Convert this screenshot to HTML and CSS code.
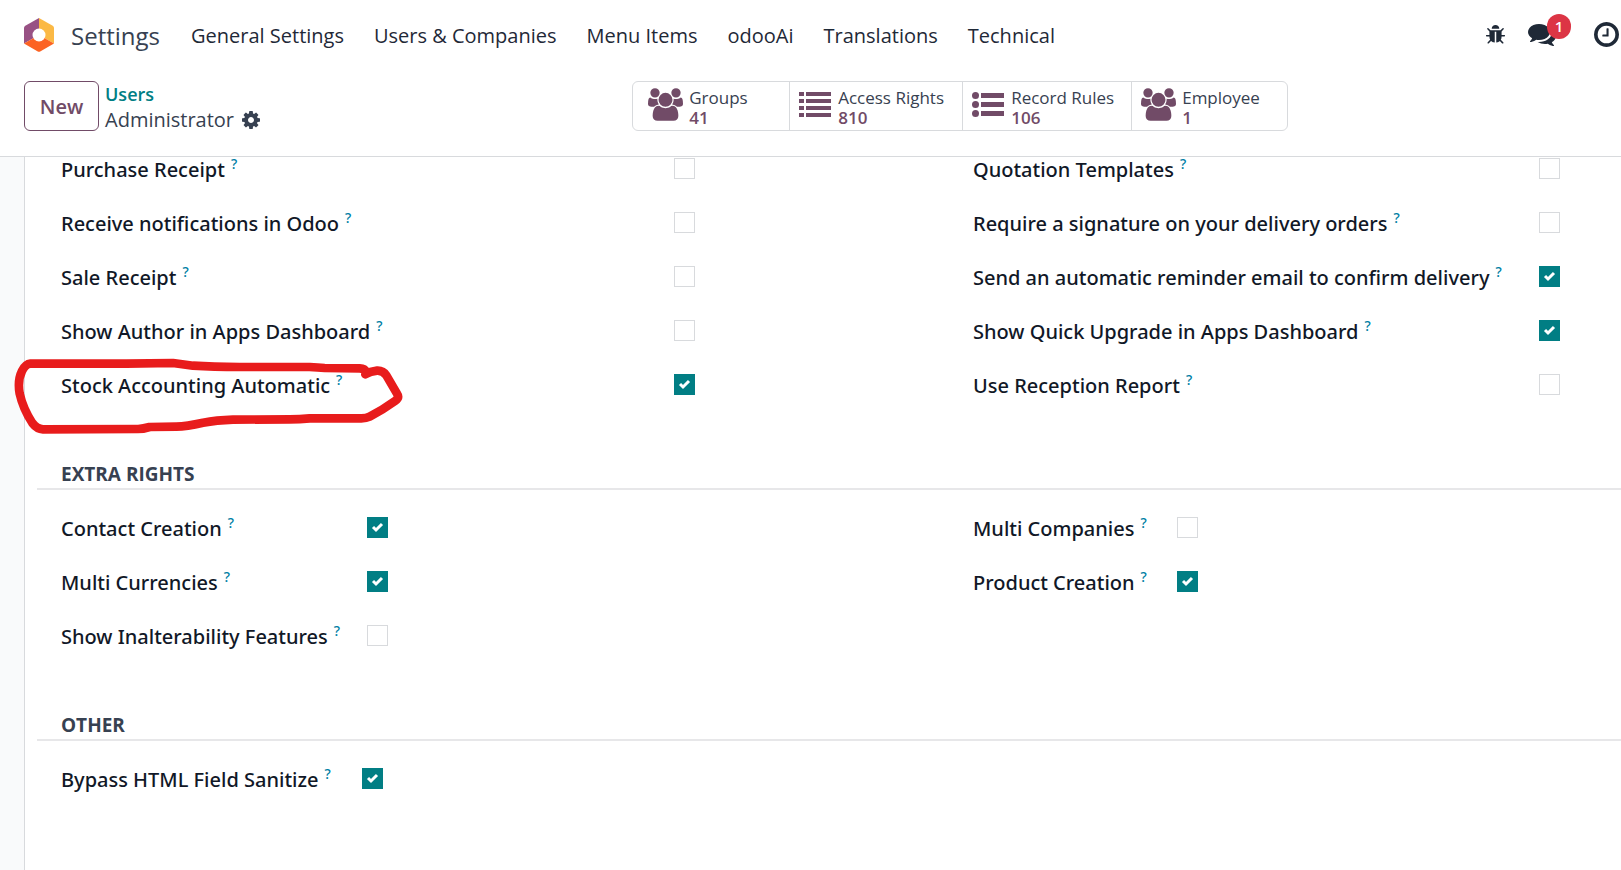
FILE: index.html
```
<!DOCTYPE html>
<html lang="en">
<head>
<meta charset="utf-8">
<title>Administrator - Settings</title>
<link rel="stylesheet" href="styles.css">
</head>
<body>
<svg class="defs" aria-hidden="true">
  <symbol id="i-users" viewBox="0 0 1920 1792"><path d="M593 896q-162 5-265 128h-134q-82 0-138-40.5t-56-118.5q0-353 124-353 6 0 43.5 21t97.5 42.5 119 21.5q67 0 133-23-5 37-5 66 0 139 81 256zm1071 637q0 120-73 189.5t-194 69.5h-874q-121 0-194-69.5t-73-189.5q0-53 3.5-103.5t14-109 26.5-108.5 43-97.5 62-81 85.5-53.5 111.5-20q10 0 43 21.5t73 48 107 48 135 21.5 135-21.5 107-48 73-48 43-21.5q61 0 111.5 20t85.5 53.5 62 81 43 97.5 26.5 108.5 14 109 3.5 103.5zm-1024-1277q0 106-75 181t-181 75-181-75-75-181 75-181 181-75 181 75 75 181zm704 384q0 159-112.5 271.5t-271.5 112.5-271.5-112.5-112.5-271.5 112.5-271.5 271.5-112.5 271.5 112.5 112.5 271.5zm576 225q0 78-56 118.5t-138 40.5h-134q-103-123-265-128 81-117 81-256 0-29-5-66 66 23 133 23 59 0 119-21.5t97.5-42.5 43.5-21q124 0 124 353zm-128-609q0 106-75 181t-181 75-181-75-75-181 75-181 181-75 181 75 75 181z"/></symbol>
</svg>

<header class="navbar">
  <a class="brand" href="#">
    <svg class="brand-logo" viewBox="0 0 30 34" aria-hidden="true">
      <path fill="#985184" d="M15 0v17L0 25.500V10Q0 8.500 1.300 7.700z"/>
      <path fill="#fbb945" d="M15 0l13.700 7.700Q30 8.500 30 10v15.500L15 17z"/>
      <path fill="#fc6323" d="M0 25.500L15 17l15 8.500L16.200 33.500Q15 34.200 13.800 33.500z"/>
      <circle cx="15" cy="17" r="6.500" fill="#fff"/>
    </svg>
    <span class="brand-name">Settings</span>
  </a>
  <nav class="menu">
    <a href="#">General Settings</a>
    <a href="#">Users &amp; Companies</a>
    <a href="#">Menu Items</a>
    <a href="#">odooAi</a>
    <a href="#">Translations</a>
    <a href="#">Technical</a>
  </nav>
  <div class="systray">
    <button type="button" class="tray-btn" aria-label="Debug"><svg class="i-bug" viewBox="96 64 1600 1600"><path d="M1696 960q0 26-19 45t-45 19h-224q0 171-67 290l208 209q19 19 19 45t-19 45q-18 19-45 19t-45-19l-198-197q-5 5-15 13t-42 28.500-65 36.500-82 29-97 13v-896h-128v896q-51 0-101.500-13.500t-87-33-66-39-43.500-32.500l-15-14-183 207q-20 21-48 21-24 0-43-16-19-18-20.500-44.500t15.500-46.500l202-227q-58-114-58-274h-224q-26 0-45-19t-19-45 19-45 45-19h224v-294l-173-173q-19-19-19-45t19-45 45-19 45 19l173 173h844l173-173q19-19 45-19t45 19 19 45-19 45l-173 173v294h224q26 0 45 19t19 45zm-480-576h-640q0-133 93.500-226.500t226.500-93.500 226.500 93.500 93.500 226.500z"/></svg></button>
    <button type="button" class="tray-btn" aria-label="Messages"><svg class="i-comments" viewBox="0 256 1792 1408"><path d="M1408 768q0 139-94 257t-256.500 186.500-353.500 68.500q-86 0-176-16-124 88-278 128-36 9-86 16h-3q-11 0-20.500-8t-11.500-21q-1-3-1-6.500t.5-6.500 2-6l2.500-5 3.500-5.500 4-5 4.500-5 4-4.500q5-6 23-25t26-29.500 22.500-29 25-38.500 20.500-44q-124-72-195-177t-71-224q0-139 94-257t256.500-186.500 353.500-68.500 353.500 68.500 256.500 186.500 94 257zm384 256q0 120-71 224.500t-195 176.500q10 24 20.500 44t25 38.500 22.500 29 26 29.500 23 25q1 1 4 4.500t4.500 5 4 5 3.500 5.500l2.500 5 2 6 .5 6.500-1 6.500q-3 14-13 22t-22 7q-50-7-86-16-154-40-278-128-90 16-176 16-271 0-472-132 58 4 88 4 161 0 309-45t264-129q125-92 192-212t67-254q0-77-23-152 129 71 204 178t75 230z"/></svg><span class="badge">1</span></button>
    <button type="button" class="tray-btn" aria-label="Activities"><svg class="i-clock" viewBox="128 128 1536 1536"><path d="M1024 544v448q0 14-9 23t-23 9h-320q-14 0-23-9t-9-23v-64q0-14 9-23t23-9h224v-352q0-14 9-23t23-9h64q14 0 23 9t9 23zm416 352q0-148-73-273t-198-198-273-73-273 73-198 198-73 273 73 273 198 198 273 73 273-73 198-198 73-273zm224 0q0 209-103 385.500t-279.500 279.500-385.500 103-385.500-103-279.500-279.500-103-385.500 103-385.500 279.500-279.500 385.500-103 385.500 103 279.500 279.500 103 385.500z"/></svg></button>
  </div>
</header>

<section class="control-panel">
  <div class="cp-left">
    <button type="button" class="btn-new">New</button>
    <div class="breadcrumb">
      <a href="#">Users</a>
      <div class="current"><span>Administrator</span>
        <button type="button" class="gear" aria-label="Actions"><svg viewBox="128 128 1536 1536"><path d="M1152 896q0-106-75-181t-181-75-181 75-75 181 75 181 181 75 181-75 75-181zm512-109v222q0 12-8 23t-20 13l-185 28q-19 54-39 91 35 50 107 138 10 12 10 25t-9 23q-27 37-99 108t-94 71q-12 0-26-9l-138-108q-44 23-91 38-16 136-29 186-7 28-36 28h-222q-14 0-24.500-8.500t-11.500-21.500l-28-184q-49-16-90-37l-141 107q-10 9-25 9-14 0-25-11-126-114-165-168-7-10-7-23 0-12 8-23 15-21 51-66.500t54-70.500q-27-50-41-99l-183-27q-13-2-21-12.500t-8-23.500v-222q0-12 8-23t19-13l186-28q14-46 39-92-40-57-107-138-10-12-10-24 0-10 9-23 26-36 98.500-107.500t94.500-71.500q13 0 26 10l138 107q44-23 91-38 16-136 29-186 7-28 36-28h222q14 0 24.500 8.500t11.500 21.500l28 184q49 16 90 37l142-107q9-9 24-9 13 0 25 10 129 119 165 170 7 8 7 22 0 12-8 23-15 21-51 66.500t-54 70.500q26 50 41 98l183 28q13 2 21 12.500t8 23.500z"/></svg></button>
      </div>
    </div>
  </div>
  <div class="stats">
    <button type="button" class="stat stat-first"><svg class="i-users"><use href="#i-users"/></svg><span class="stat-text"><span>Groups</span><b>41</b></span></button>
    <button type="button" class="stat stat-wide"><svg class="i-list" viewBox="0 0 32 26"><path d="M0 0h5v4H0zM7 0h25v4H7zM0 7h5v4H0zM7 7h25v4H7zM0 14h5v4H0zM7 14h25v4H7zM0 21h5v4H0zM7 21h25v4H7z"/></svg><span class="stat-text"><span>Access Rights</span><b>810</b></span></button>
    <button type="button" class="stat stat-medium"><svg class="i-list" viewBox="0 0 32 26"><circle cx="3.500" cy="3.500" r="3.500"/><circle cx="3.500" cy="12.500" r="3.500"/><circle cx="3.500" cy="21.500" r="3.500"/><path d="M9 1h23v5H9zM9 10h23v5H9zM9 19h23v5H9z"/></svg><span class="stat-text"><span>Record Rules</span><b>106</b></span></button>
    <button type="button" class="stat"><svg class="i-users"><use href="#i-users"/></svg><span class="stat-text"><span>Employee</span><b>1</b></span></button>
  </div>
</section>

<main class="content">
  <div class="sheet">
    <section class="group technical">
      <div class="col">
        <div class="field"><label for="f1">Purchase Receipt<sup>?</sup></label><input type="checkbox" id="f1"></div>
        <div class="field"><label for="f2">Receive notifications in Odoo<sup>?</sup></label><input type="checkbox" id="f2"></div>
        <div class="field"><label for="f3">Sale Receipt<sup>?</sup></label><input type="checkbox" id="f3"></div>
        <div class="field"><label for="f4">Show Author in Apps Dashboard<sup>?</sup></label><input type="checkbox" id="f4"></div>
        <div class="field"><label for="f5">Stock Accounting Automatic<sup>?</sup></label><input type="checkbox" id="f5" checked></div>
      </div>
      <div class="col">
        <div class="field"><label for="f6">Quotation Templates<sup>?</sup></label><input type="checkbox" id="f6"></div>
        <div class="field"><label for="f7">Require a signature on your delivery orders<sup>?</sup></label><input type="checkbox" id="f7"></div>
        <div class="field"><label for="f8">Send an automatic reminder email to confirm delivery<sup>?</sup></label><input type="checkbox" id="f8" checked></div>
        <div class="field"><label for="f9">Show Quick Upgrade in Apps Dashboard<sup>?</sup></label><input type="checkbox" id="f9" checked></div>
        <div class="field"><label for="f10">Use Reception Report<sup>?</sup></label><input type="checkbox" id="f10"></div>
      </div>
    </section>

    <h2>Extra Rights</h2>
    <section class="group extra">
      <div class="col">
        <div class="field"><label for="f11">Contact Creation<sup>?</sup></label><input type="checkbox" id="f11" checked></div>
        <div class="field"><label for="f12">Multi Currencies<sup>?</sup></label><input type="checkbox" id="f12" checked></div>
        <div class="field"><label for="f13">Show Inalterability Features<sup>?</sup></label><input type="checkbox" id="f13"></div>
      </div>
      <div class="col">
        <div class="field"><label for="f14">Multi Companies<sup>?</sup></label><input type="checkbox" id="f14"></div>
        <div class="field"><label for="f15">Product Creation<sup>?</sup></label><input type="checkbox" id="f15" checked></div>
      </div>
    </section>

    <h2>Other</h2>
    <section class="group other">
      <div class="col">
        <div class="field"><label for="f16">Bypass HTML Field Sanitize<sup>?</sup></label><input type="checkbox" id="f16" checked></div>
      </div>
    </section>
  </div>
  <svg class="marker" viewBox="40 620 1176 234" aria-hidden="true"><path d="M1097 672Q1112 663 1132 661Q1150 660 1160 675L1192 730Q1200 742 1186 752Q1150 778 1110 799Q1100 804 1085 804L930 804Q900 807 870 807L700 808Q650 810 610 817Q560 828 530 829L450 830Q430 836 415 836L130 837Q112 836 98 818Q70 775 60 730Q53 690 67 662Q78 641 92 640L380 640L520 638Q545 641 580 646Q640 650 720 650L930 650Q955 652 975 653L1080 654Q1095 655 1098 662"/></svg>
</main>
</body>
</html>
```

FILE: styles.css
```
* { box-sizing: border-box; }

body {
  margin: 0;
  min-height: 100vh;
  display: flex;
  flex-direction: column;
  overflow: hidden;
  background: #fff;
  color: #111827;
  font-family: "Open Sans", "Noto Sans", sans-serif;
  font-size: 20px;
  line-height: 26px;
}

a { color: inherit; text-decoration: none; }

button {
  font: inherit;
  color: inherit;
  background: none;
  border: 0;
  padding: 0;
  cursor: pointer;
}

svg { display: block; fill: currentColor; }

.defs { position: absolute; width: 0; height: 0; }

/* Top bar */
.navbar {
  display: flex;
  align-items: center;
  height: 70px;
  padding: 0 2px 0 24px;
  color: #1f2937;
}

.brand {
  display: flex;
  align-items: center;
  gap: 17px;
  margin-right: 31px;
  color: #374151;
  font-size: 24px;
}

.brand-logo { width: 30px; height: 34px; }
.brand-name, .menu { padding-top: 2px; }

.menu {
  display: flex;
  gap: 30px;
  white-space: nowrap;
}

.systray {
  display: flex;
  align-items: center;
  margin-left: auto;
  padding-bottom: 1px;
}

.tray-btn { position: relative; }

.i-bug { width: 19px; height: 19px; margin-right: 23px; }
.i-comments { width: 28px; height: 22px; margin-right: 38px; }
.i-clock { width: 25px; height: 25px; }

.badge {
  position: absolute;
  left: 19px;
  top: -10px;
  width: 24px;
  height: 25px;
  border-radius: 13px;
  background: #dc3545;
  color: #fff;
  font-size: 15px;
  font-weight: 600;
  line-height: 24px;
}

/* Control panel */
.control-panel {
  display: grid;
  grid-template-columns: 39% auto;
  align-items: start;
  height: 87px;
  padding-top: 11px;
  border-bottom: 1px solid #d8dadd;
}

.cp-left {
  display: flex;
  gap: 6px;
  padding-left: 24px;
}

.btn-new {
  width: 75px;
  height: 50px;
  padding-top: 2px;
  border: 1px solid #714b67;
  border-radius: 6px;
  color: #714b67;
  font-weight: 600;
}

.breadcrumb a { display: block; color: #017e84; font-weight: 600; font-size: 18px; }

.current { display: flex; align-items: center; gap: 8px; color: #374151; }

.gear svg { width: 18px; height: 18px; }

.stats {
  display: flex;
  width: 656px;
  height: 50px;
  border: 1px solid #d8dadd;
  border-radius: 6px;
}

.stat {
  display: flex;
  align-items: center;
  gap: 6px;
  flex: 146 0 0;
  padding-left: 9px;
  color: #714b67;
  border-left: 1px solid #d8dadd;
  text-align: left;
  white-space: nowrap;
}

.stat-first { flex-grow: 141; padding-left: 15px; border-left: 0; }
.stat-wide { flex-grow: 163; gap: 7px; }
.stat-medium { flex-grow: 159; gap: 7px; }

.i-users { width: 35px; height: 33px; margin-bottom: 3px; }
.i-list { width: 32px; height: 26px; margin-bottom: 3px; }

.stat-text {
  display: flex;
  flex-direction: column;
  padding-top: 3px;
  font-size: 17px;
  line-height: 20px;
}

.stat-text span { color: #374151; }
.stat-text b { font-weight: 600; }

/* Form */
.content {
  position: relative;
  flex: 1;
  padding-left: 24px;
  background: #f9fafb;
}

.sheet {
  min-height: 713px;
  padding: 1px 0 0 12px;
  border-left: 1px solid #d8dadd;
  background: #fff;
}

.group {
  display: grid;
  grid-template-columns: 912fr 648fr;
  padding-left: 24px;
}

.col {
  display: flex;
  flex-direction: column;
  gap: 32px;
}

.field {
  display: grid;
  align-items: start;
  height: 22px;
  line-height: 24px;
  white-space: nowrap;
}

.technical .field { grid-template-columns: 613px auto; }
.technical .col + .col .field { grid-template-columns: 566px auto; }
.extra .field { grid-template-columns: 306px auto; }
.extra .col + .col .field { grid-template-columns: 204px auto; }
.other .field { grid-template-columns: 301px auto; }

label { font-family: "Noto Sans", "Open Sans", sans-serif; font-weight: 500; }

sup {
  margin-left: 6px;
  color: #0180a5;
  font-size: 14px;
  line-height: 0;
  vertical-align: 8px;
}

input[type="checkbox"] {
  appearance: none;
  width: 21px;
  height: 21px;
  margin: 0;
  border: 1px solid #d8dadd;
  background: #fff;
}

input[type="checkbox"]:checked {
  border-color: #017e84;
  background: #017e84 url("data:image/svg+xml,%3Csvg xmlns='http://www.w3.org/2000/svg' viewBox='0 0 19 19'%3E%3Cpath d='M5 9l3 3 6-6' fill='none' stroke='%23fff' stroke-width='3'/%3E%3C/svg%3E") center / 19px 19px;
}

h2 {
  margin: 65px 0 27px;
  padding: 0 0 1px 24px;
  border-bottom: 2px solid #e7e7e9;
  color: #374151;
  font-size: 19px;
  font-weight: 700;
  line-height: 26px;
  text-transform: uppercase;
}

/* Freehand highlight over the form */
.marker {
  position: absolute;
  left: 13px;
  top: 200px;
  width: 392px;
  height: 78px;
  pointer-events: none;
}

.marker path {
  fill: none;
  stroke: #e81c1c;
  stroke-width: 26;
  stroke-linecap: round;
  stroke-linejoin: round;
}
```
